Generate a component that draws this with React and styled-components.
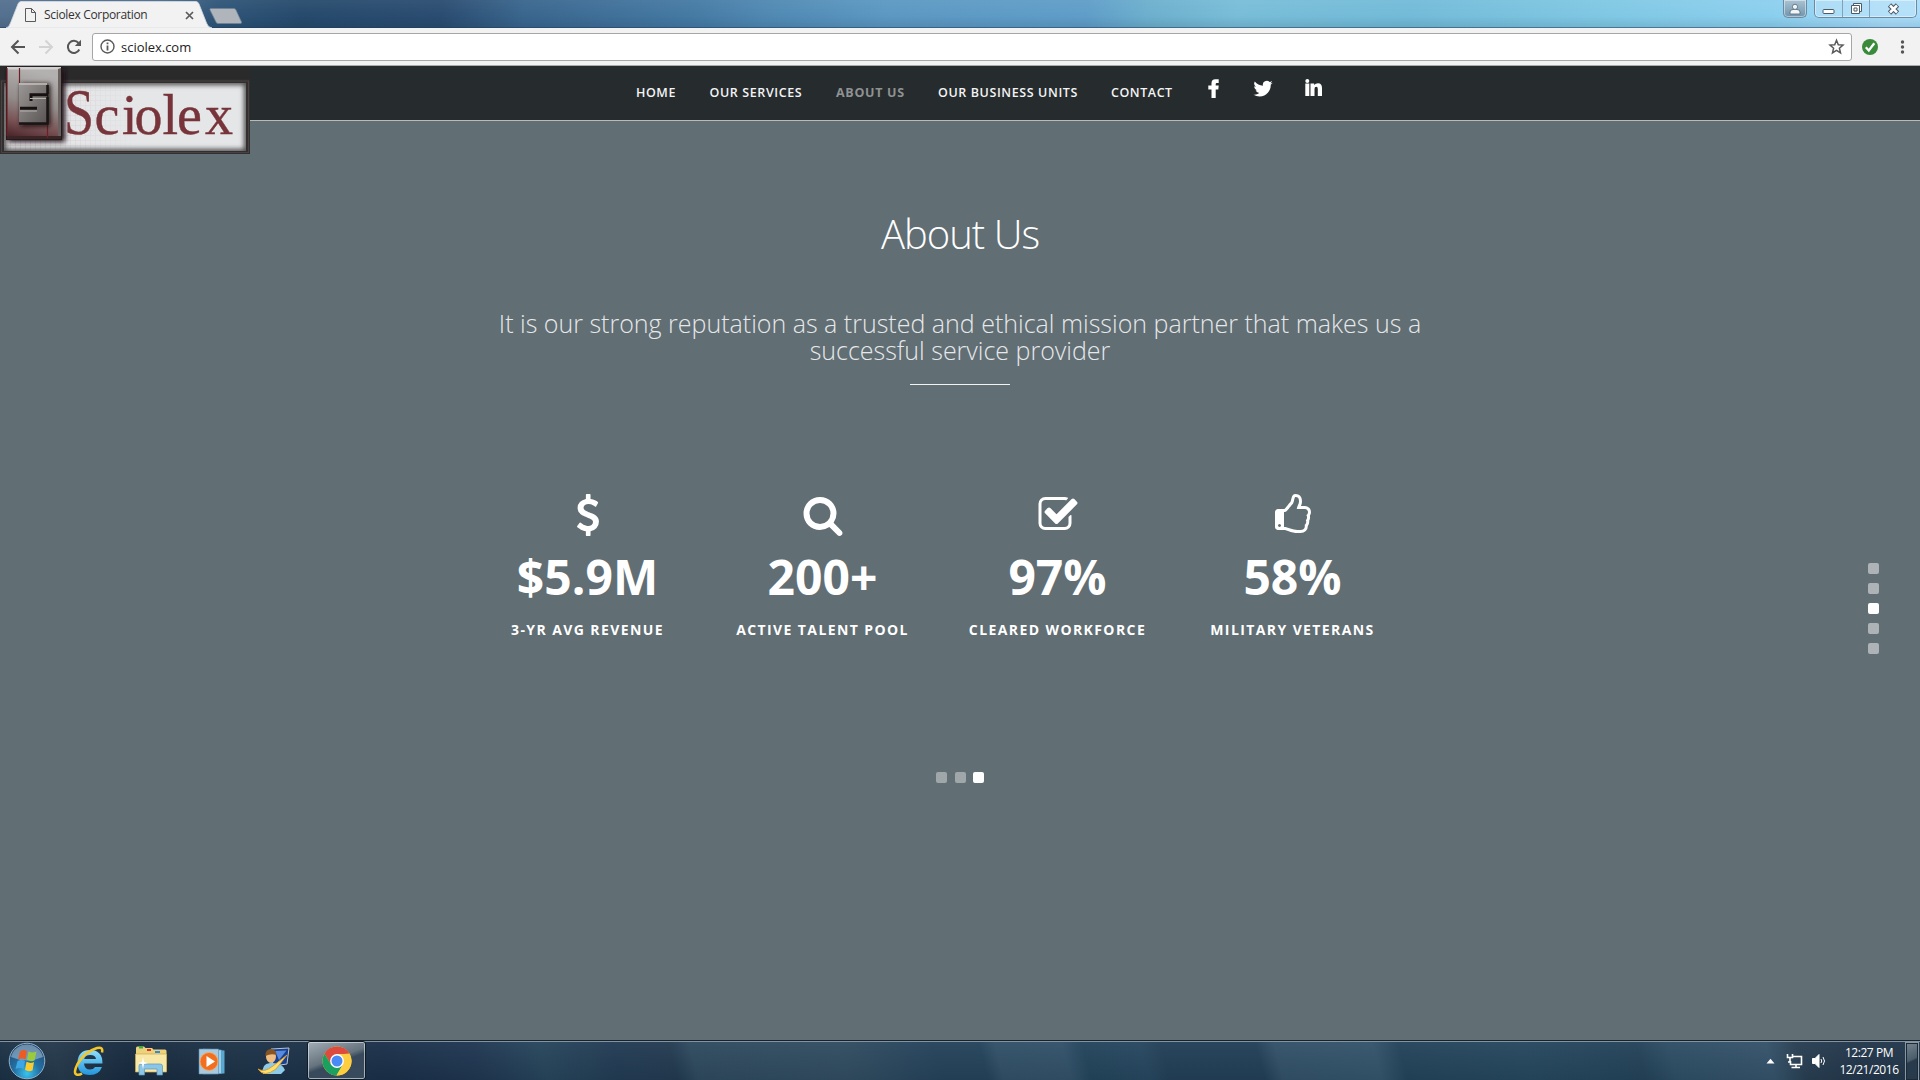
import React from 'react';
import styled, { createGlobalStyle } from 'styled-components';

const Global = createGlobalStyle`
  * { box-sizing: border-box; }
  body { margin: 0; background: #616e74; overflow: hidden; }
`;

const Screen = styled.div`
  display: flex;
  flex-direction: column;
  width: 1920px;
  height: 1080px;
  overflow: hidden;
  font-family: 'Open Sans', 'Noto Sans', sans-serif;
`;

/* ---------- browser chrome ---------- */

const TitleBar = styled.header`
  display: flex;
  align-items: flex-start;
  height: 28px;
  background:
    linear-gradient(180deg, rgba(255,255,255,.05), rgba(255,255,255,0) 60%, rgba(0,20,40,.1)),
    linear-gradient(97deg, #54708f 0, #4b6b8c 160px, #2f5578 215px, #264a6c 300px, #2a4c70 440px, #39658d 520px, #457aa4 690px,
      #4f88b2 760px, #5b98c2 880px, #5f9dc8 1080px, #6cafcd 1140px, #78bdd8 1230px, #72bbd8 1400px, #80c8e4 1600px, #8bcfee 1760px, #a9dcfa 1880px);
  border-bottom: 1px solid rgba(20, 50, 80, 0.55);
`;

const Tab = styled.div`
  display: grid;
  height: 28px;
  width: 206px;
  margin-left: 6px;
  > * { grid-area: 1 / 1; }
`;

const TabContent = styled.div`
  display: flex;
  align-items: center;
  padding: 2px 18px 0 19px;
`;

const TabTitle = styled.span`
  flex: 1;
  padding-left: 8px;
  font-size: 12px;
  line-height: 16px;
  letter-spacing: -0.32px;
  color: #333;
  white-space: nowrap;
`;

const NewTab = styled.svg`
  margin: 8px 0 0 -3px;
`;

const WindowControls = styled.div`
  display: flex;
  gap: 7px;
  margin-left: auto;
  padding-right: 3px;
`;

const ControlGroup = styled.div`
  display: flex;
  height: 18px;
  border: 1px solid #6c8ba3;
  border-top: 0;
  border-radius: 0 0 5px 5px;
  background: ${(p) => (p.$dark ? 'linear-gradient(#a9c3d3, #7094ab)' : 'rgba(190,228,248,.55)')};
  box-shadow: inset 0 0 0 1px rgba(255, 255, 255, 0.45);
`;

const Control = styled.div`
  display: flex;
  align-items: center;
  justify-content: center;
  width: ${(p) => p.$w}px;
  & + & { border-left: 1px solid #7fa3bb; }
`;

const Toolbar = styled.div`
  display: flex;
  align-items: center;
  height: 38px;
  background: #f2f2f2;
  border-bottom: 1px solid #a9aaab;
  padding-left: 10px;
`;

const NavButtons = styled.div`
  display: flex;
  gap: 12px;
  width: 82px;
`;

const Omnibox = styled.div`
  display: flex;
  align-items: center;
  width: 1760px;
  height: 28px;
  padding: 0 6px 0 7px;
  background: #fff;
  border: 1px solid #a6a6a6;
  border-radius: 3px;
`;

const Url = styled.span`
  flex: 1;
  padding-left: 6px;
  font-size: 13px;
  letter-spacing: -0.02px;
  color: #222;
`;

const Extensions = styled.div`
  display: flex;
  align-items: center;
  gap: 20px;
  padding-left: 10px;
`;

/* ---------- site ---------- */

const Page = styled.main`
  position: relative;
  display: flex;
  flex-direction: column;
  height: 974px;
  background: #616e74;
`;

const SiteNav = styled.nav`
  display: flex;
  height: 55px;
  padding-left: 636px;
  background: linear-gradient(90deg, #2a2a2a 250px, #262b2d 250px);
  border-bottom: 1px solid #b9bbb4;
`;

const NavLink = styled.a`
  width: ${(p) => p.$w}px;
  padding-top: 18px;
  font-size: 12.5px;
  line-height: 18px;
  font-weight: ${(p) => (p.$active ? 700 : 600)};
  letter-spacing: ${(p) => p.$ls}px;
  color: ${(p) => (p.$active ? '#8f9293' : '#f4f4f4')};
  white-space: nowrap;
`;

const Socials = styled.div`
  display: flex;
  gap: 30.5px;
  padding-top: 12px;
`;

const Logo = styled.svg`
  position: absolute;
  left: 0;
  top: 0;
`;

const Slide = styled.section`
  display: flex;
  flex-direction: column;
  align-items: center;
  color: #fff;
`;

const Heading = styled.h1`
  margin: 84px 0 0;
  font-size: 40px;
  line-height: 58px;
  font-weight: 300;
  letter-spacing: -1px;
`;

const Lead = styled.p`
  width: 940px;
  margin: 47px 0 0;
  text-align: center;
  font-size: 25px;
  line-height: 27px;
  font-weight: 300;
  color: #e6e8e9;
`;

const Rule = styled.hr`
  width: 100px;
  height: 1px;
  margin: 20px 0 0;
  border: 0;
  background: #f2f3f3;
`;

const Stats = styled.div`
  display: grid;
  grid-template-columns: repeat(4, 235px);
  width: 940px;
  margin-top: 109px;
  margin-left: -40px;
`;

const Stat = styled.div`
  display: flex;
  flex-direction: column;
  align-items: center;
`;

const Value = styled.strong`
  margin-top: 8px;
  font-size: 48px;
  line-height: 66px;
  font-weight: 700;
`;

const Label = styled.span`
  margin-top: 10px;
  font-size: 14px;
  line-height: 20px;
  font-weight: 700;
  letter-spacing: 1.4px;
  white-space: nowrap;
`;

const Pager = styled.div`
  display: flex;
  gap: 7.5px;
  margin-top: 132px;
`;

const SidePager = styled.div`
  position: absolute;
  left: 1868px;
  top: 497px;
  display: flex;
  flex-direction: column;
  gap: 9px;
`;

const Dot = styled.span`
  width: 11px;
  height: 11px;
  border-radius: 2px;
  background: ${(p) => (p.$on ? '#fff' : p.$side ? '#adb3b7' : '#a0a7aa')};
`;

/* ---------- taskbar ---------- */

const Taskbar = styled.footer`
  display: flex;
  height: 40px;
  border-top: 1px solid #17222c;
  box-shadow: inset 0 1px 0 #8294a4;
  background:
    linear-gradient(180deg, rgba(255,255,255,.04), rgba(0,0,0,.06)),
    linear-gradient(75deg, #1b3044 0, #24394c 60px, #172a3e 130px, #1d3247 230px, #1a3049 380px, #1f3550 460px, #26455b 530px, #223b53 600px, #223a50 655px,
      #2e495e 675px, #314c60 820px, #24425a 910px, #23425a 955px, #304f66 970px, #315068 1035px, #22445b 1055px,
      #26475f 1110px, #223f56 1130px, #223f56 1222px, #315067 1240px, #33536a 1335px, #234359 1360px, #25475e 1480px,
      #234258 1590px, #2d4d64 1620px, #345269 1715px, #283e51 1745px, #22364a 1800px, #22384d 1920px);
`;

const Task = styled.div`
  display: flex;
  align-items: center;
  justify-content: center;
  width: ${(p) => p.$w}px;
  margin-left: ${(p) => p.$ml || 0}px;
  ${(p) =>
    p.$active &&
    `border: 1px solid #0f1a25; border-radius: 3px;
     box-shadow: inset 0 0 0 1px rgba(220,230,238,.65);
     background: linear-gradient(160deg, #a3adb5 0%, #66747f 45%, #37495a 55%, #384b5d 100%);`}
`;

const Tray = styled.div`
  display: flex;
  align-items: center;
  margin-left: auto;
  padding: 1px 1px 0 0;
`;

const Clock = styled.div`
  width: 66px;
  margin-left: 9px;
  text-align: center;
  color: #fff;
  font-size: 12px;
  line-height: 17px;
  letter-spacing: -0.45px;
  white-space: nowrap;
`;

const ShowDesktop = styled.div`
  width: 14px;
  height: 39px;
  margin-left: 3px;
  border: 1px solid #8797a4;
  box-shadow: inset 0 0 0 1px #1d2a36;
  background: linear-gradient(155deg, #75848f 0, #4b5d6b 45%, #283b4d 50%);
`;

const ICONS = {
  dollar:
    'M1362 1185q0 153-99.5 263.5t-258.5 136.5v175q0 14-9 23t-23 9h-135q-13 0-22.5-9.5t-9.5-22.5v-175q-66-9-127.5-31t-101.5-44.5-74-48-46.5-37.5-17.5-18q-17-21-2-41l103-135q7-10 23-12 15-2 24 9l2 2q113 99 243 125 37 8 74 8 81 0 142.5-43t61.5-122q0-28-15-53t-33.5-42-58.5-37.5-66-32-80-32.5q-39-16-61.5-25t-61.5-26.5-62.5-31-56.5-35.5-53.5-42.5-43.5-49-35.5-58-21-66.5-8.5-78q0-138 98-242t255-134v-180q0-13 9.5-22.5t22.5-9.5h135q14 0 23 9t9 23v176q57 6 110.5 23t87 33.5 63.5 37.5 39 29 15 14q17 18 5 38l-81 146q-8 15-23 16-14 3-27-7-3-3-14.5-12t-39-26.5-58.5-32-74.5-26-85.5-11.5q-95 0-155 43t-60 111q0 26 8.5 48t29.5 41.5 39.5 33 56 31 60.5 27 70 27.5q53 20 81 31.5t76 35 75.5 42.5 62 50 53 63.5 31.5 76.5 13 94z',
  search:
    'M1216 832q0-185-131.5-316.5t-316.5-131.5-316.5 131.5-131.5 316.5 131.5 316.5 316.5 131.5 316.5-131.5 131.5-316.5zm512 832q0 52-38 90t-90 38q-54 0-90-38l-343-342q-179 124-399 124-143 0-273.5-55.5t-225-150-150-225-55.5-273.5 55.5-273.5 150-225 225-150 273.5-55.5 273.5 55.5 225 150 150 225 55.5 273.5q0 220-124 399l343 343q37 37 37 90z',
  check:
    'M1472 930v318q0 119-84.5 203.5t-203.5 84.5h-832q-119 0-203.5-84.5t-84.5-203.5v-832q0-119 84.5-203.5t203.5-84.5h832q63 0 117 25 15 7 18 23 3 17-9 29l-49 49q-10 10-23 10-3 0-9-2-23-6-45-6h-832q-66 0-113 47t-47 113v832q0 66 47 113t113 47h832q66 0 113-47t47-113v-254q0-13 9-22l64-64q10-10 23-10 6 0 12 3 20 8 20 29zm231-489l-814 814q-24 24-57 24t-57-24l-430-430q-24-24-24-57t24-57l110-110q24-24 57-24t57 24l263 263 647-647q24-24 57-24t57 24l110 110q24 24 24 57t-24 57z',
  thumb:
    'M384 1344q0-26-19-45t-45-19-45 19-19 45 19 45 45 19 45-19 19-45zm1152-576q0-51-39-89.5t-89-38.5h-352q0-58 48-159.5t48-160.5q0-98-32-145t-128-47q-26 26-38 85t-30.5 125.5-59.5 109.5q-22 23-77 91-4 5-23 30t-31.5 41-34.5 42.5-40 44-38.5 35.5-40 27-35.5 9h-32v640h32q13 0 31.5 3t33 6.5 38 11 35 11.5 35.5 12.5 29 10.5q211 73 342 73h121q192 0 192-167 0-26-5-56 30-16 47.5-52.5t17.5-73.5-18-69q53-50 53-119 0-25-10-55.5t-25-47.5q32-1 53.5-47t21.5-81zm128-1q0 89-49 163 9 33 9 69 0 77-38 144 3 21 3 43 0 101-60 178 1 139-85 219.5t-227 80.5h-129q-96 0-189.5-22.5t-216.5-65.5q-116-40-138-40h-288q-53 0-90.5-37.5t-37.5-90.5v-640q0-53 37.5-90.5t90.5-37.5h274q36-24 137-155 58-75 107-128 24-25 35.5-85.5t30.5-126.5 62-108q39-37 90-37 84 0 151 32.5t102 101.5 35 186q0 93-48 192h176q104 0 180 76t76 179z',
};

const STATS = [
  { icon: 'dollar', value: '$5.9M', label: '3-YR AVG REVENUE' },
  { icon: 'search', value: '200+', label: 'ACTIVE TALENT POOL' },
  { icon: 'check', value: '97%', label: 'CLEARED WORKFORCE' },
  { icon: 'thumb', value: '58%', label: 'MILITARY VETERANS' },
];

const LINKS = [
  { text: 'HOME', w: 73.5, ls: 0.55 },
  { text: 'OUR SERVICES', w: 126.5, ls: 0.6 },
  { text: 'ABOUT US', w: 102, ls: 0.7, active: true },
  { text: 'OUR BUSINESS UNITS', w: 173, ls: 0.6 },
  { text: 'CONTACT', w: 97, ls: 0.55 },
];

const StatIcon = ({ name }) => (
  <svg width="42" height="42" viewBox="0 0 1792 1792" fill="#fff">
    <path d={ICONS[name]} />
  </svg>
);

const SciolexLogo = () => (
  <Logo width="250" height="90" viewBox="0 66 250 90">
    <defs>
      <linearGradient id="metal" x1="0.3" y1="0" x2="0.1" y2="1">
        <stop offset="0" stopColor="#b3b1b0" />
        <stop offset=".45" stopColor="#928c8a" />
        <stop offset=".75" stopColor="#7b5558" />
        <stop offset="1" stopColor="#4a2428" />
      </linearGradient>
      <linearGradient id="block" x1="0" y1="0" x2="1" y2="1">
        <stop offset="0" stopColor="#9a9896" />
        <stop offset="1" stopColor="#5a5554" />
      </linearGradient>
      <pattern id="mesh" width="5" height="5" patternUnits="userSpaceOnUse">
        <path d="M0 .5H5M.5 0V5" stroke="#c9a9ad" strokeWidth=".6" opacity=".6" />
      </pattern>
      <linearGradient id="fade">
        <stop offset="0" stopColor="#fff" />
        <stop offset=".55" stopColor="#fff" stopOpacity="0" />
      </linearGradient>
      <mask id="meshMask">
        <rect x="4" y="83" width="242" height="68" fill="url(#fade)" />
      </mask>
      <filter id="soft" x="-20%" y="-20%" width="140%" height="140%">
        <feGaussianBlur stdDeviation="2.4" />
      </filter>
      <clipPath id="plate">
        <rect x="4" y="83" width="242" height="68" />
      </clipPath>
    </defs>
    <rect x="0" y="79.5" width="250" height="74.5" fill="#332e2f" />
    <rect x="1.5" y="81" width="247" height="71.5" fill="none" stroke="#494243" />
    <rect x="4" y="83" width="242" height="68" fill="#e4e6e8" />
    <rect x="4" y="83" width="242" height="68" fill="url(#mesh)" mask="url(#meshMask)" />
    <g clipPath="url(#plate)">
      <rect x="3" y="82" width="244" height="70" fill="none" stroke="#4b4849" strokeWidth="6" filter="url(#soft)" />
    </g>
    <rect x="8" y="69" width="57" height="73" fill="#1a1112" filter="url(#soft)" />
    <rect x="6" y="67" width="56" height="73" fill="#241a1b" />
    <rect x="7" y="68" width="52" height="69" fill="url(#metal)" />
    <path d="M7 67H61V69.500H7Z" fill="#d2cfce" />
    <path d="M58 69V136H61V68Z" fill="#6a6261" />
    <path d="M7 136H61V139H7Z" fill="#3a2426" />
    <path d="M7 68V136M19.500 68V116M47.500 117V138" stroke="#6f1f26" strokeWidth="1.2" />
    <rect x="21" y="84" width="29" height="42" fill="#150e0f" filter="url(#soft)" />
    <rect x="19" y="83" width="28" height="40" fill="url(#block)" />
    <path d="M19 84H47" stroke="#c4c1bf" strokeWidth="1.5" />
    <path d="M47.500 85V94M47.500 97V123.500H19" stroke="#1a1415" strokeWidth="2.500" fill="none" />
    <path d="M48 94.800H31V101M20 108.300H37" fill="none" stroke="#171112" strokeWidth="3" />
    <path d="M30 98.500H46M20 111H37" fill="none" stroke="#b5b2b0" strokeWidth="1.200" />
    <g fill="#77343a" stroke="#77343a" strokeWidth=".4" fontFamily="'Liberation Serif', serif">
      <text x="64" y="134" fontSize="65" textLength="30" lengthAdjust="spacingAndGlyphs">S</text>
      <text y="134" fontSize="56" x="94.500 122 134.500 162.500 177 205">ciolex</text>
    </g>
  </Logo>
);

export default function App() {
  return (
    <Screen>
      <Global />
      <TitleBar>
        <Tab>
          <svg width="206" height="28">
            <path d="M0 28Q3 27.500 4.500 23L12 4Q13 1.500 15 1.500H190Q192 1.500 193 4L200.500 23Q202 27.500 206 28Z" fill="#f2f2f2" stroke="#d5dde4" strokeWidth=".8" />
          </svg>
          <TabContent>
            <svg width="11" height="14" fill="none" stroke="#5a5a5a">
              <path d="M.5.5H6.500L10.500 4.500V13.500H.5ZM6.500.5V4.500H10.500" />
            </svg>
            <TabTitle>Sciolex Corporation</TabTitle>
            <svg width="9" height="9" stroke="#5a5a5a" strokeWidth="1.7">
              <path d="M1 1L8 8M8 1L1 8" />
            </svg>
          </TabContent>
        </Tab>
        <NewTab width="34" height="16">
          <path d="M1.500.5H25Q26.500.5 27 2L32.500 14Q33 15.500 31 15.500H9Q7.500 15.500 7 14L1 2Q.5.5 1.500.5Z" fill="#afb5bb" stroke="#6f8396" strokeWidth=".7" />
        </NewTab>
        <WindowControls>
          <ControlGroup $dark>
            <Control $w={22}>
              <svg width="12" height="12" fill="#f3f5f7" stroke="#5c7385" strokeWidth=".9">
                <path d="M1 11V9Q1 6.500 4 6.500H8Q11 6.500 11 9V11Z" />
                <circle cx="6" cy="3.800" r="2.600" />
              </svg>
            </Control>
          </ControlGroup>
          <ControlGroup>
            <Control $w={27}>
              <svg width="13" height="12">
                <rect x="1" y="6.500" width="11" height="4" rx="1" fill="#fff" stroke="#4b5b69" />
              </svg>
            </Control>
            <Control $w={27}>
              <svg width="13" height="13" fill="#fff" stroke="#4b5b69">
                <path d="M3.500 1.500H11.500V9.500H3.500Z" />
                <path d="M1.500 3.500H9.500V11.500H1.500ZM4 6H7V9H4Z" fillRule="evenodd" />
              </svg>
            </Control>
            <Control $w={47}>
              <svg width="13" height="12">
                <path d="M2.500 2L10.500 10M10.500 2L2.500 10" stroke="#4b5b69" strokeWidth="4.600" />
                <path d="M3 2.500L10 9.500M10 2.500L3 9.500" stroke="#fff" strokeWidth="2.500" />
              </svg>
            </Control>
          </ControlGroup>
        </WindowControls>
      </TitleBar>

      <Toolbar>
        <NavButtons>
          <svg width="16" height="16" fill="none" stroke="#555" strokeWidth="2">
            <path d="M15 8H2.500M8.500 1.500L2 8L8.500 14.500" />
          </svg>
          <svg width="16" height="16" fill="none" stroke="#d3d3d3" strokeWidth="2">
            <path d="M1 8H13.500M7.500 1.500L14 8L7.500 14.500" />
          </svg>
          <svg width="16" height="16" fill="none" stroke="#555" strokeWidth="2">
            <path d="M13.300 10.500A6 6 0 1 1 12.500 4" />
            <path d="M15 .8V7H8.800Z" fill="#555" stroke="none" />
          </svg>
        </NavButtons>
        <Omnibox>
          <svg width="15" height="15" fill="none" stroke="#5a5a5a" strokeWidth="1.400">
            <circle cx="7.500" cy="7.500" r="6.500" />
            <path d="M7.500 6.500V11.500M7.500 3.500V5.300" strokeWidth="1.800" />
          </svg>
          <Url>sciolex.com</Url>
          <svg width="17" height="17" viewBox="0 0 17 17" fill="none" stroke="#5a5a5a" strokeWidth="1.500">
            <path d="M8.500 2.300L10.300 6.700L15 7.100L11.400 10.200L12.500 14.800L8.500 12.300L4.500 14.800L5.600 10.200L2 7.100L6.700 6.700Z" />
          </svg>
        </Omnibox>
        <Extensions>
          <svg width="16" height="16">
            <circle cx="8" cy="8" r="8" fill="#3a8a3c" />
            <path d="M3.800 8.300L6.800 11.500L12.300 4.300" fill="none" stroke="#fff" strokeWidth="2.300" />
          </svg>
          <svg width="8" height="16" fill="#555">
            <circle cx="4.500" cy="3" r="1.700" />
            <circle cx="4.500" cy="8" r="1.700" />
            <circle cx="4.500" cy="13" r="1.700" />
          </svg>
        </Extensions>
      </Toolbar>

      <Page>
        <SiteNav>
          {LINKS.map((l) => (
            <NavLink key={l.text} $w={l.w} $ls={l.ls} $active={l.active}>{l.text}</NavLink>
          ))}
          <Socials>
            <svg width="12" height="21" viewBox="0 0 12 21" fill="#fff">
              <path d="M3.500 20V11.500H.3V7.500H3.500V5Q3.500 1.200 7.300 1.200H10.700V5H8.800Q7.700 5 7.700 6V7.500H10.700L10.300 11.500H7.700V20Z" />
            </svg>
            <svg width="24" height="21" viewBox="0 0 24 21" fill="#fff">
              <path transform="translate(2.500 1) scale(.8)" d="M23.950 4.570a10 10 0 0 1-2.820.77 4.960 4.960 0 0 0 2.160-2.720 9.900 9.900 0 0 1-3.120 1.190 4.920 4.920 0 0 0-8.380 4.480A13.930 13.930 0 0 1 1.640 3.160a4.920 4.920 0 0 0 1.520 6.570 4.900 4.900 0 0 1-2.230-.61v.06a4.920 4.920 0 0 0 3.950 4.830 5 5 0 0 1-2.210.08 4.940 4.940 0 0 0 4.600 3.420A9.870 9.870 0 0 1 0 19.540a13.940 13.940 0 0 0 7.550 2.210c9.050 0 14-7.500 14-13.980 0-.21 0-.42-.02-.63a9.940 9.940 0 0 0 2.420-2.570z" />
            </svg>
            <svg width="18" height="21" viewBox="0 0 18 21" fill="#fff">
              <circle cx="2.300" cy="3" r="2" />
              <path d="M.3 5.500H4.300V18H.3ZM5.500 5.500H9.200V7Q10.500 5.200 13 5.200Q17 5.200 17 10V18H12.800V11Q12.800 8.800 11.300 8.800Q9.500 8.800 9.500 11V18H5.500Z" />
            </svg>
          </Socials>
        </SiteNav>
        <SciolexLogo />

        <Slide>
          <Heading>About Us</Heading>
          <Lead>It is our strong reputation as a trusted and ethical mission partner that makes us a successful service provider</Lead>
          <Rule />
          <Stats>
            {STATS.map((s) => (
              <Stat key={s.label}>
                <StatIcon name={s.icon} />
                <Value>{s.value}</Value>
                <Label>{s.label}</Label>
              </Stat>
            ))}
          </Stats>
          <Pager>
            <Dot /><Dot /><Dot $on />
          </Pager>
        </Slide>

        <SidePager>
          {[0, 1, 2, 3, 4].map((i) => <Dot key={i} $side $on={i === 2} />)}
        </SidePager>
      </Page>

      <Taskbar>
        <Task $w={38} $ml={8}>
          <svg width="38" height="38" viewBox="0 0 38 38">
            <defs>
              <radialGradient id="orb" cx=".5" cy=".85" r=".8">
                <stop offset="0" stopColor="#39c4ee" />
                <stop offset=".45" stopColor="#2472a6" />
                <stop offset="1" stopColor="#254a72" />
              </radialGradient>
            </defs>
            <circle cx="19" cy="19" r="17.800" fill="url(#orb)" stroke="#8fb0c8" />
            <path d="M3 15A16.500 16.500 0 0 1 35 15Q19 22 3 15Z" fill="#b5cfe0" opacity=".5" />
            <path d="M12 9.500Q15.500 7 19 9L17.500 17.500Q14 15.500 10 17.500Z" fill="#ee5a24" />
            <path d="M20.500 9.500Q24.500 11.500 28.500 9.500L26.500 18.500Q23 20 19 18Z" fill="#9bcb3c" />
            <path d="M9.500 19Q13.500 17 17 19L15.500 27Q12 25 7.500 27Z" fill="#3fa6e6" />
            <path d="M18.500 19.800Q22.500 22 26 20L24.500 28.500Q20.500 30 17 28Z" fill="#fccb2e" />
          </svg>
        </Task>
        <Task $w={34} $ml={26}>
          <svg width="34" height="34" viewBox="0 0 34 34">
            <defs>
              <linearGradient id="ie" x2="0" y2="1">
                <stop offset="0" stopColor="#8fe0fb" />
                <stop offset="1" stopColor="#2296dc" />
              </linearGradient>
            </defs>
            <path d="M30.500 19.500H12Q12.500 25.500 18 25.500Q21.500 25.500 23 23H30Q27 31 18 31Q5.500 31 5.500 18.500Q6 6 18 6Q30.500 6 30.500 19.500ZM12.200 15H24Q23.500 11 18.200 11Q13 11 12.200 15Z" fill="url(#ie)" />
            <path d="M30 8.500Q31.500 2.500 25 4Q13 7.500 5.500 20Q1 29 4.500 30.500Q7 31.500 10 29.500" fill="none" stroke="#f5c629" strokeWidth="2.500" />
          </svg>
        </Task>
        <Task $w={34} $ml={28}>
          <svg width="34" height="32" viewBox="0 0 34 32">
            <path d="M2 3Q2 1.500 3.500 1.500H10L11.500 3H18L19.500 4.500H31Q32.500 4.500 32.500 6V26H2Z" fill="#ecd27c" />
            <path d="M1.500 9H32.500V27H1.500Z" fill="#f8e8a7" stroke="#cfaa4d" strokeWidth=".7" />
            <path d="M5 2.500H9" stroke="#2ab53e" strokeWidth="2" />
            <path d="M13 5H17" stroke="#d7372b" strokeWidth="2" />
            <path d="M21 7H26" stroke="#2a8de2" strokeWidth="2" />
            <path d="M5 30V21Q5 19 7 19H26Q28.500 19 28.500 21V30H23V24H10.500V30Z" fill="#8cc6e6" stroke="#5796bd" strokeWidth=".7" />
            <path d="M9 12L10 17L14 18L10 19L9 24L8 19L4 18L8 17Z" fill="#fff" />
          </svg>
        </Task>
        <Task $w={30} $ml={29}>
          <svg width="30" height="30" viewBox="0 0 30 30">
            <path d="M8 3L27.500 4.500V27.500L8 28Z" fill="#5aa9d3" />
            <path d="M6 3L24.500 4V27.500L6 28Z" fill="#9dd1ea" stroke="#4c91b8" strokeWidth=".6" />
            <path d="M2 3H21.500V28H2Z" fill="#a9c9dc" stroke="#558cb0" strokeWidth=".6" />
            <circle cx="12" cy="15.500" r="9" fill="#f07020" stroke="#f9aa68" strokeWidth=".8" />
            <path d="M9.500 10V21L18 15.500Z" fill="#fff" />
          </svg>
        </Task>
        <Task $w={34} $ml={30}>
          <svg width="34" height="30" viewBox="0 0 34 30">
            <path d="M14 3L32 2L30 18L16 20Z" fill="#173f93" stroke="#bcc5cc" />
            <path d="M18 5L29.500 4.500L22 14Z" fill="#568be0" />
            <path d="M6 28Q4 18 13 17Q25 16 28 24L24 28Z" fill="#8dcce8" />
            <ellipse cx="14" cy="10.500" rx="5" ry="6.500" fill="#f0bd83" />
            <path d="M8.500 10Q8 3 14.500 3Q19.500 4 19.500 9Q14 7 8.500 10Z" fill="#875423" />
            <path d="M1 23Q7 27 16 20L30 9L19 23Q7 32 1 23Z" fill="#ffdf6b" stroke="#d99b2a" strokeWidth=".9" />
          </svg>
        </Task>
        <Task $w={59} $ml={16} $active>
          <svg width="30" height="30" viewBox="-15 -15 30 30">
            <circle r="14.500" fill="#ffcd40" />
            <path d="M-12.560 -7.250A14.500 14.500 0 0 1 12.560 -7.250L0 -6.800L-6 3.400Z" fill="#dd4b3e" />
            <path d="M-12.560 -7.250A14.500 14.500 0 0 0 -.5 14.500L5.900 3.400L-5.900 3.400Z" fill="#1aa15f" />
            <path d="M-.5 14.500A14.500 14.500 0 0 0 12.560 -7.250L0 -6.800L5.900 3.400Z" fill="#ffcd40" />
            <circle r="6.900" fill="#fff" />
            <circle r="5.500" fill="#4a8af4" />
          </svg>
        </Task>
        <Tray>
          <svg width="9" height="6" fill="#fff"><path d="M.5 5.500L4.500 .8L8.500 5.500Z" /></svg>
          <svg width="36" height="20" viewBox="2 0 36 20" fill="none" stroke="#fff">
            <path d="M19.500 5.500H28.500V13.500H17.500V10M18.500 16.500H27M23 13.500V16" strokeWidth="1.600" />
            <path d="M14.500 3V6.500H19.500V3M17 6V11H15" strokeWidth="1.600" />
          </svg>
          <svg width="16" height="16" viewBox="0 0 16 16" fill="none" stroke="#fff">
            <path d="M1.500 5.500H4L8 1.500V14.500L4 10.500H1.500Z" fill="#fff" />
            <path d="M10 6Q11.500 8 10 10M12 4Q15 8 12 12" />
          </svg>
          <Clock>
            <div>12:27 PM</div>
            <div>12/21/2016</div>
          </Clock>
          <ShowDesktop />
        </Tray>
      </Taskbar>
    </Screen>
  );
}
